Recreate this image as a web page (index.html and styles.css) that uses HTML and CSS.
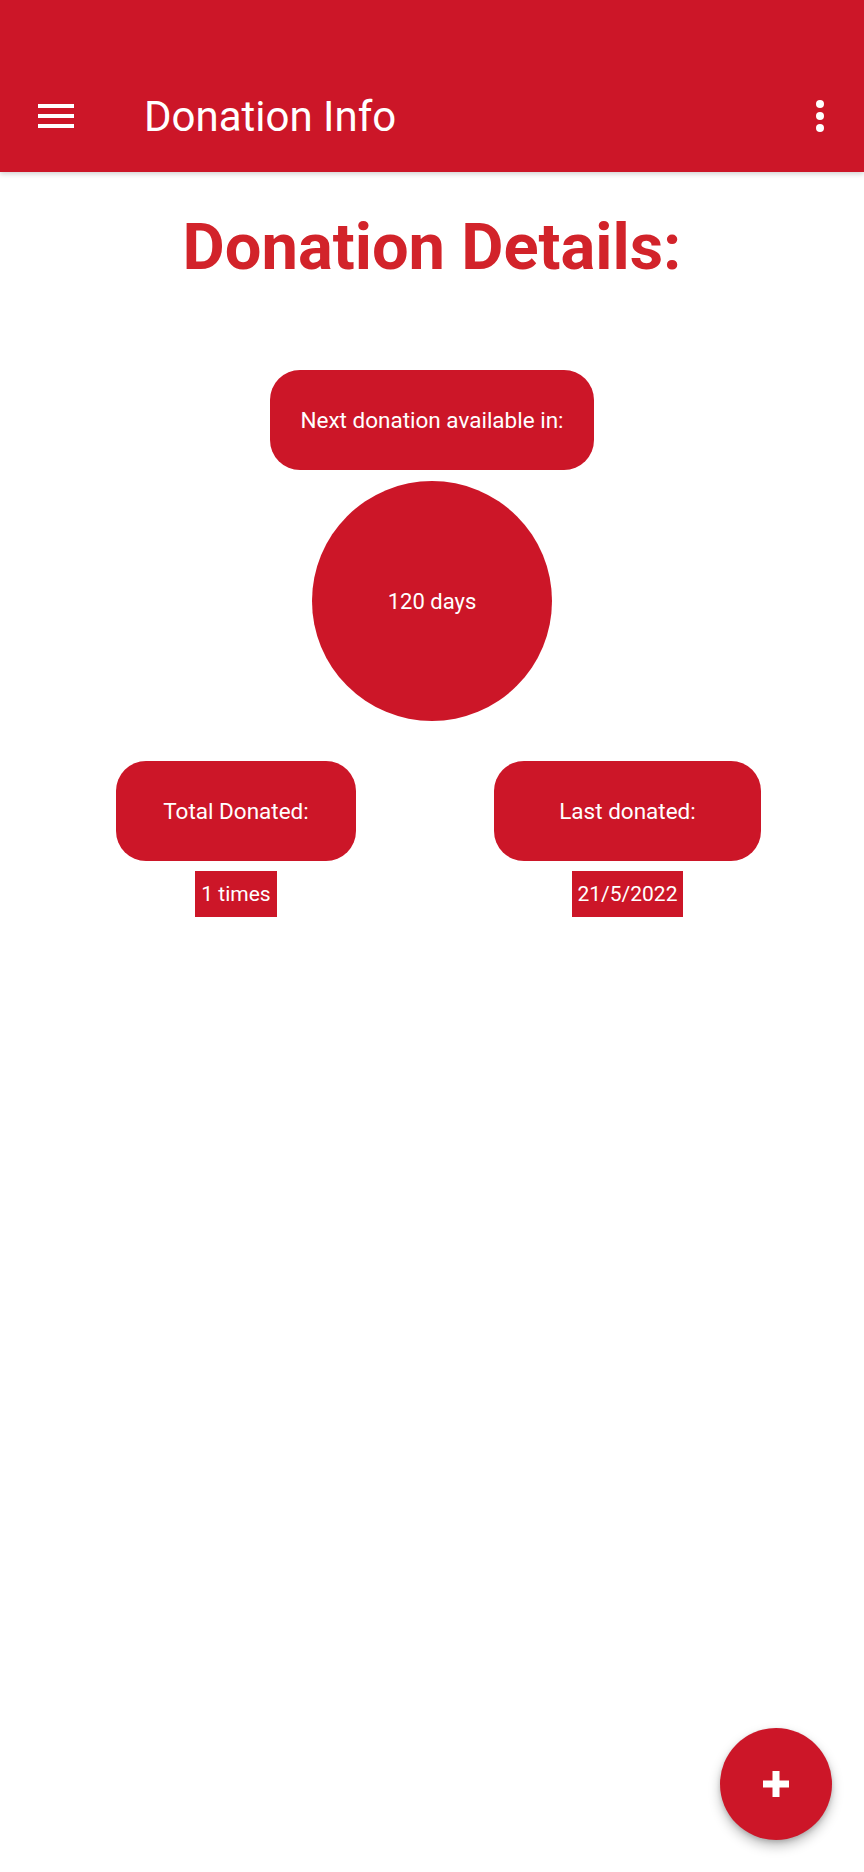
FILE: index.html
```html
<!DOCTYPE html>
<html>
<head>
<meta charset="utf-8">
<link rel="stylesheet" href="styles.css">
</head>
<body>
<header class="appbar">
  <div class="status"></div>
  <div class="toolbar">
    <svg class="icon" viewBox="0 0 24 24" width="48" height="48"><path fill="#fff" d="M3 18h18v-2H3v2zm0-5h18v-2H3v2zm0-7v2h18V6H3z"/></svg>
    <div class="title">Donation Info</div>
    <svg class="icon more" viewBox="0 0 24 24" width="48" height="48"><circle cx="12" cy="6" r="2" fill="#fff"/><circle cx="12" cy="12" r="2" fill="#fff"/><circle cx="12" cy="18" r="2" fill="#fff"/></svg>
  </div>
</header>
<main class="content">
  <h1 class="heading">Donation Details:</h1>
  <div class="pill next">Next donation available in:</div>
  <div class="circle">120 days</div>
  <div class="stats">
    <div class="stat stat-left">
      <div class="pill total">Total Donated:</div>
      <div class="value">1 times</div>
    </div>
    <div class="stat stat-right">
      <div class="pill last">Last donated:</div>
      <div class="value">21/5/2022</div>
    </div>
  </div>
</main>
<button class="fab"><svg viewBox="0 0 26 26" width="26" height="26"><path fill="#fff" d="M9.5 0h7v9.5H26v7h-9.5V26h-7v-9.5H0v-7h9.5z"/></svg></button>
</body>
</html>
```
FILE: styles.css
```css
* { box-sizing: border-box; }
html, body { margin: 0; padding: 0; }
body {
  width: 864px;
  height: 1872px;
  background: #fff;
  font-family: Roboto, "Noto Sans", sans-serif;
  position: relative;
  overflow: hidden;
}
.appbar {
  background: #cc1628;
  height: 172px;
  box-shadow: 0 2px 5px rgba(0,0,0,0.18);
  position: relative;
  z-index: 1;
}
.status { height: 60px; }
.toolbar {
  height: 112px;
  display: flex;
  align-items: center;
  padding: 0 20px 0 32px;
}
.icon { display: block; flex: none; }
.title {
  color: #fff;
  font-size: 42px;
  margin-left: 64px;
  flex: 1;
  line-height: 1;
  padding-top: 2px;
}
.content {
  display: flex;
  flex-direction: column;
  align-items: center;
}
.heading {
  margin: 38px 0 0;
  font-size: 65px;
  font-weight: 700;
  color: #d2232a;
  line-height: 75px;
  height: 75px;
}
.pill {
  background: #cc1628;
  color: #fff;
  font-size: 22.5px;
  height: 100px;
  border-radius: 30px;
  display: flex;
  align-items: center;
  justify-content: center;
  padding: 0 30px;
}
.next { margin-top: 85px; width: 324px; }
.circle {
  margin-top: 11px;
  width: 240px;
  height: 240px;
  border-radius: 50%;
  background: #cc1628;
  color: #fff;
  font-size: 22px;
  display: flex;
  align-items: center;
  justify-content: center;
}
.stats {
  align-self: stretch;
  display: flex;
  padding-left: 116px;
  gap: 138px;
  margin-top: 40px;
}
.stat {
  display: flex;
  flex-direction: column;
  align-items: center;
}
.total { width: 240px; }
.last { width: 267px; }
.value {
  margin-top: 10px;
  background: #cc1628;
  color: #fff;
  font-size: 21px;
  height: 46px;
  line-height: 46px;
  padding: 0 6px;
}
.fab {
  position: absolute;
  left: 720px;
  top: 1728px;
  width: 112px;
  height: 112px;
  border-radius: 50%;
  border: none;
  background: #cc1628;
  display: flex;
  align-items: center;
  justify-content: center;
  box-shadow: 0 6px 12px rgba(0,0,0,0.25), 0 2px 4px rgba(0,0,0,0.15);
  padding: 0;
}
```
